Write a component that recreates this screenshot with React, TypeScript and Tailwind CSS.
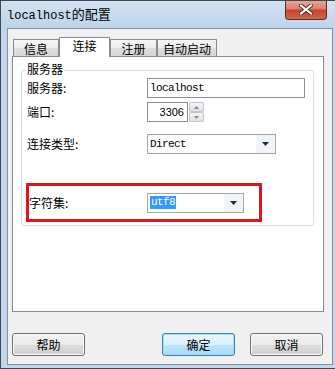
import React from "react";

const cjk = "font-['Noto_Sans_CJK_SC','Noto_Sans',sans-serif]";
const mono = "font-['Liberation_Mono','Noto_Sans_CJK_SC',monospace]";

function Tab({ label, width, active }: { label: string; width: string; active?: boolean }) {
  if (active) {
    return (
      <div
        className={`${width} h-[20px] -mb-px relative z-10 flex justify-center pt-[1px] border border-b-0 border-[#898c95] bg-white text-[12px] leading-[14px] text-black ${cjk}`}
      >
        {label}
      </div>
    );
  }
  return (
    <div
      className={`${width} h-[17px] flex justify-center pt-[2px] border border-b-0 border-[#898c95] bg-[linear-gradient(180deg,#f6f6f6_0%,#ececec_50%,#dedede_51%,#d6d6d6_100%)] text-[12px] leading-[14px] text-black ${cjk}`}
    >
      {label}
    </div>
  );
}

function DropArrow() {
  return (
    <svg width="7" height="4" viewBox="0 0 7 4">
      <path d="M0 0H7L3.5 4Z" fill="#182a56" />
    </svg>
  );
}

function Combo({ width, children }: { width: string; children: React.ReactNode }) {
  return (
    <div className={`${width} h-[20px] flex border border-[#a3a6ad] bg-white`}>
      <div className="flex-1 flex items-center pl-[2px] min-w-0">{children}</div>
      <div className="w-[19px] flex items-center justify-center bg-[#f2f3f6]">
        <DropArrow />
      </div>
    </div>
  );
}

function Button({ label, primary }: { label: string; primary?: boolean }) {
  return (
    <div
      className={`w-[73px] h-[23px] rounded-[3px] border flex items-center justify-center text-[12px] text-black ${cjk} ${
        primary
          ? "border-[#3c7fb1] shadow-[inset_0_0_0_1px_#a8dcf3] bg-[linear-gradient(180deg,#eaf6fd_0%,#d9f0fc_50%,#bee6fd_51%,#a7d9f5_100%)]"
          : "border-[#707070] shadow-[inset_0_0_0_1px_#fbfbfb] bg-[linear-gradient(180deg,#f2f2f2_0%,#ebebeb_50%,#dddddd_51%,#cfcfcf_100%)]"
      }`}
    >
      {label}
    </div>
  );
}

export default function App() {
  return (
    <div className="w-[335px] h-[369px] relative overflow-hidden flex flex-col border-l border-t border-b border-[#3f4954] bg-[#c2d6ea]">
      {/* title bar */}
      <div className="h-[27px] flex items-center pl-[6px] bg-[linear-gradient(180deg,#d3e3f2_0%,#c5d9ec_60%,#bfd4e9_100%)]">
        <span className={`text-[12px] text-black ${mono}`}>
          localhost<span className={`text-[13px] ${cjk}`}>的配置</span>
        </span>
      </div>
      <div className="absolute top-[-1px] right-[8px] w-[42px] h-[20px] rounded-b-[4px] border border-t-0 border-[#5b2a22] bg-[linear-gradient(180deg,#e9a99b_0%,#dc8270_45%,#c8432b_55%,#d0664c_100%)] flex items-center justify-center">
        <svg width="14" height="11" viewBox="0 0 14 11">
          <path d="M2 1.5L12 9.5M12 1.5L2 9.5" stroke="#4a2a24" strokeWidth="4" strokeLinecap="square" />
          <path d="M2 1.5L12 9.5M12 1.5L2 9.5" stroke="#ffffff" strokeWidth="2.2" strokeLinecap="square" />
        </svg>
      </div>

      {/* client area */}
      <div className="flex-1 ml-[6px] mr-[2px] mb-[3px] border border-[#7f91a6] bg-[#f0f0f0] flex flex-col pl-[4px] pr-[8px]">
        {/* tabs */}
        <div className="mt-[8px] h-[19px] flex items-end pl-[1px]">
          <Tab label="信息" width="w-[46px]" />
          <Tab label="连接" width="w-[51px]" active />
          <Tab label="注册" width="w-[47px]" />
          <Tab label="自动启动" width="w-[60px]" />
        </div>

        {/* panel */}
        <div className="w-[312px] h-[256px] border border-[#898c95] bg-white">
          <div className="relative mt-[13px] ml-[8px] mr-[9px] h-[156px] rounded-[3px] border border-[#d5dfe5]">
            <span className={`absolute left-[4px] top-[-9px] px-[1px] bg-white text-[12px] leading-[14px] text-black ${cjk}`}>
              服务器
            </span>

            <div className="flex items-center pl-[5px] mt-[7px]">
              <span className={`w-[120px] text-[12px] text-black ${cjk}`}>服务器:</span>
              <div className="w-[158px] h-[20px] flex items-center pl-[2px] border border-[#8a8d93] bg-white">
                <span className={`text-[11px] tracking-[-0.6px] text-black ${mono}`}>localhost</span>
              </div>
            </div>

            <div className="flex items-center pl-[5px] mt-[4px]">
              <span className={`w-[120px] text-[12px] text-black ${cjk}`}>端口:</span>
              <div className="w-[41px] h-[20px] flex items-center justify-end pr-[3px] border border-[#8a8d93] bg-white">
                <span className="text-[11px] text-black font-['Liberation_Sans',sans-serif]">3306</span>
              </div>
              <div className="ml-[1px] w-[15px] h-[20px] flex flex-col">
                <div className="h-[10px] flex items-center justify-center border border-[#c2c5cb] rounded-[2px] bg-[linear-gradient(180deg,#f4f4f4,#e2e2e2)]">
                  <svg width="5" height="3" viewBox="0 0 5 3">
                    <path d="M0 3H5L2.5 0Z" fill="#7a8aa0" />
                  </svg>
                </div>
                <div className="h-[10px] flex items-center justify-center border border-[#c2c5cb] rounded-[2px] bg-[linear-gradient(180deg,#f4f4f4,#e2e2e2)]">
                  <svg width="5" height="3" viewBox="0 0 5 3">
                    <path d="M0 0H5L2.5 3Z" fill="#7a8aa0" />
                  </svg>
                </div>
              </div>
            </div>

            <div className="flex items-center pl-[5px] mt-[12px]">
              <span className={`w-[120px] text-[12px] text-black ${cjk}`}>连接类型:</span>
              <Combo width="w-[129px]">
                <span className={`text-[11px] tracking-[-0.6px] text-black ${mono}`}>Direct</span>
              </Combo>
            </div>

            {/* highlighted charset row */}
            <div className="mt-[29px] ml-[4px] w-[236px] h-[39px] border-[3px] border-[#e0141b] flex items-center">
              <span className={`w-[118px] text-[12px] text-black ${cjk}`}>字符集:</span>
              <Combo width="w-[97px]">
                <span className={`text-[11px] tracking-[-0.6px] leading-[13px] text-white bg-[#3399ff] px-[1px] ${mono}`}>utf8</span>
              </Combo>
            </div>
          </div>
        </div>

        {/* buttons */}
        <div className="mt-[21px] flex pr-[1px]">
          <Button label="帮助" />
          <div className="ml-auto flex gap-[15px]">
            <Button label="确定" primary />
            <Button label="取消" />
          </div>
        </div>
      </div>
    </div>
  );
}
